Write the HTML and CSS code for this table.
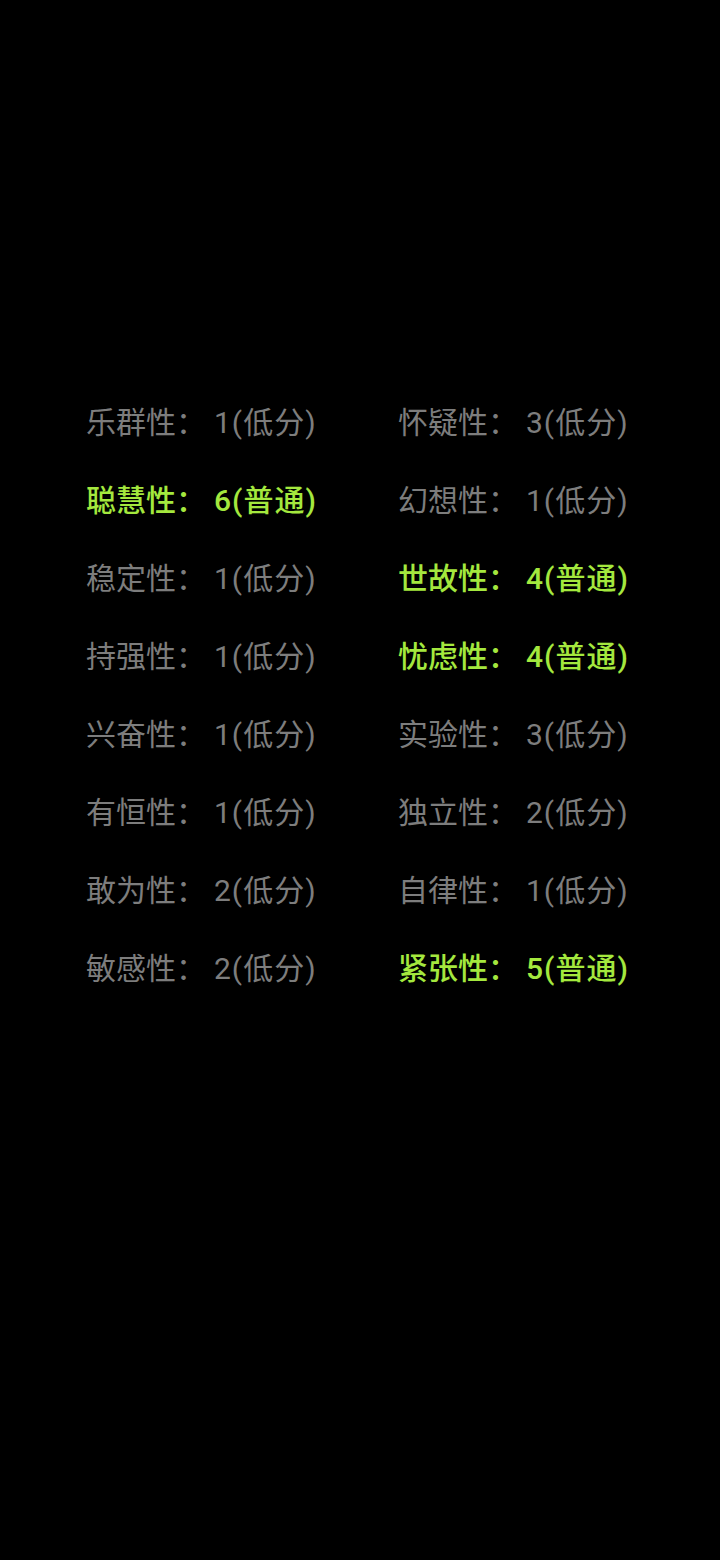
FILE: index.html
```html
<html lang="zh-CN"><head>
<meta charset="UTF-8">
<meta name="viewport" content="width=device-width, initial-scale=1.0">
<title>16PF</title>
<link rel="stylesheet" href="styles.css">
</head>
<body>
<div class="scores">
<div class="item"><span class="k">乐群性：</span><span class="v">1(低分)</span></div>
<div class="item"><span class="k">怀疑性：</span><span class="v">3(低分)</span></div>
<div class="item hi"><span class="k">聪慧性：</span><span class="v">6(普通)</span></div>
<div class="item"><span class="k">幻想性：</span><span class="v">1(低分)</span></div>
<div class="item"><span class="k">稳定性：</span><span class="v">1(低分)</span></div>
<div class="item hi"><span class="k">世故性：</span><span class="v">4(普通)</span></div>
<div class="item"><span class="k">持强性：</span><span class="v">1(低分)</span></div>
<div class="item hi"><span class="k">忧虑性：</span><span class="v">4(普通)</span></div>
<div class="item"><span class="k">兴奋性：</span><span class="v">1(低分)</span></div>
<div class="item"><span class="k">实验性：</span><span class="v">3(低分)</span></div>
<div class="item"><span class="k">有恒性：</span><span class="v">1(低分)</span></div>
<div class="item"><span class="k">独立性：</span><span class="v">2(低分)</span></div>
<div class="item"><span class="k">敢为性：</span><span class="v">2(低分)</span></div>
<div class="item"><span class="k">自律性：</span><span class="v">1(低分)</span></div>
<div class="item"><span class="k">敏感性：</span><span class="v">2(低分)</span></div>
<div class="item hi"><span class="k">紧张性：</span><span class="v">5(普通)</span></div>
</div>
</body></html>
```

FILE: styles.css
```css
body {
    margin: 0;
    background: #000;
    height: 1560px;
    font-family: Roboto, "Noto Sans CJK SC", sans-serif;
}

.scores {
    display: grid;
    grid-template-columns: 312px 1fr;
    padding: 384px 0 0 86px;
}

.item {
    height: 78px;
    line-height: 78px;
    font-size: 30px;
    color: #7d7d7d;
    white-space: nowrap;
}

.item .v {
    margin-left: 8px;
    letter-spacing: 1px;
}

.item.hi {
    color: #a4e83e;
    font-weight: 500;
}
```
